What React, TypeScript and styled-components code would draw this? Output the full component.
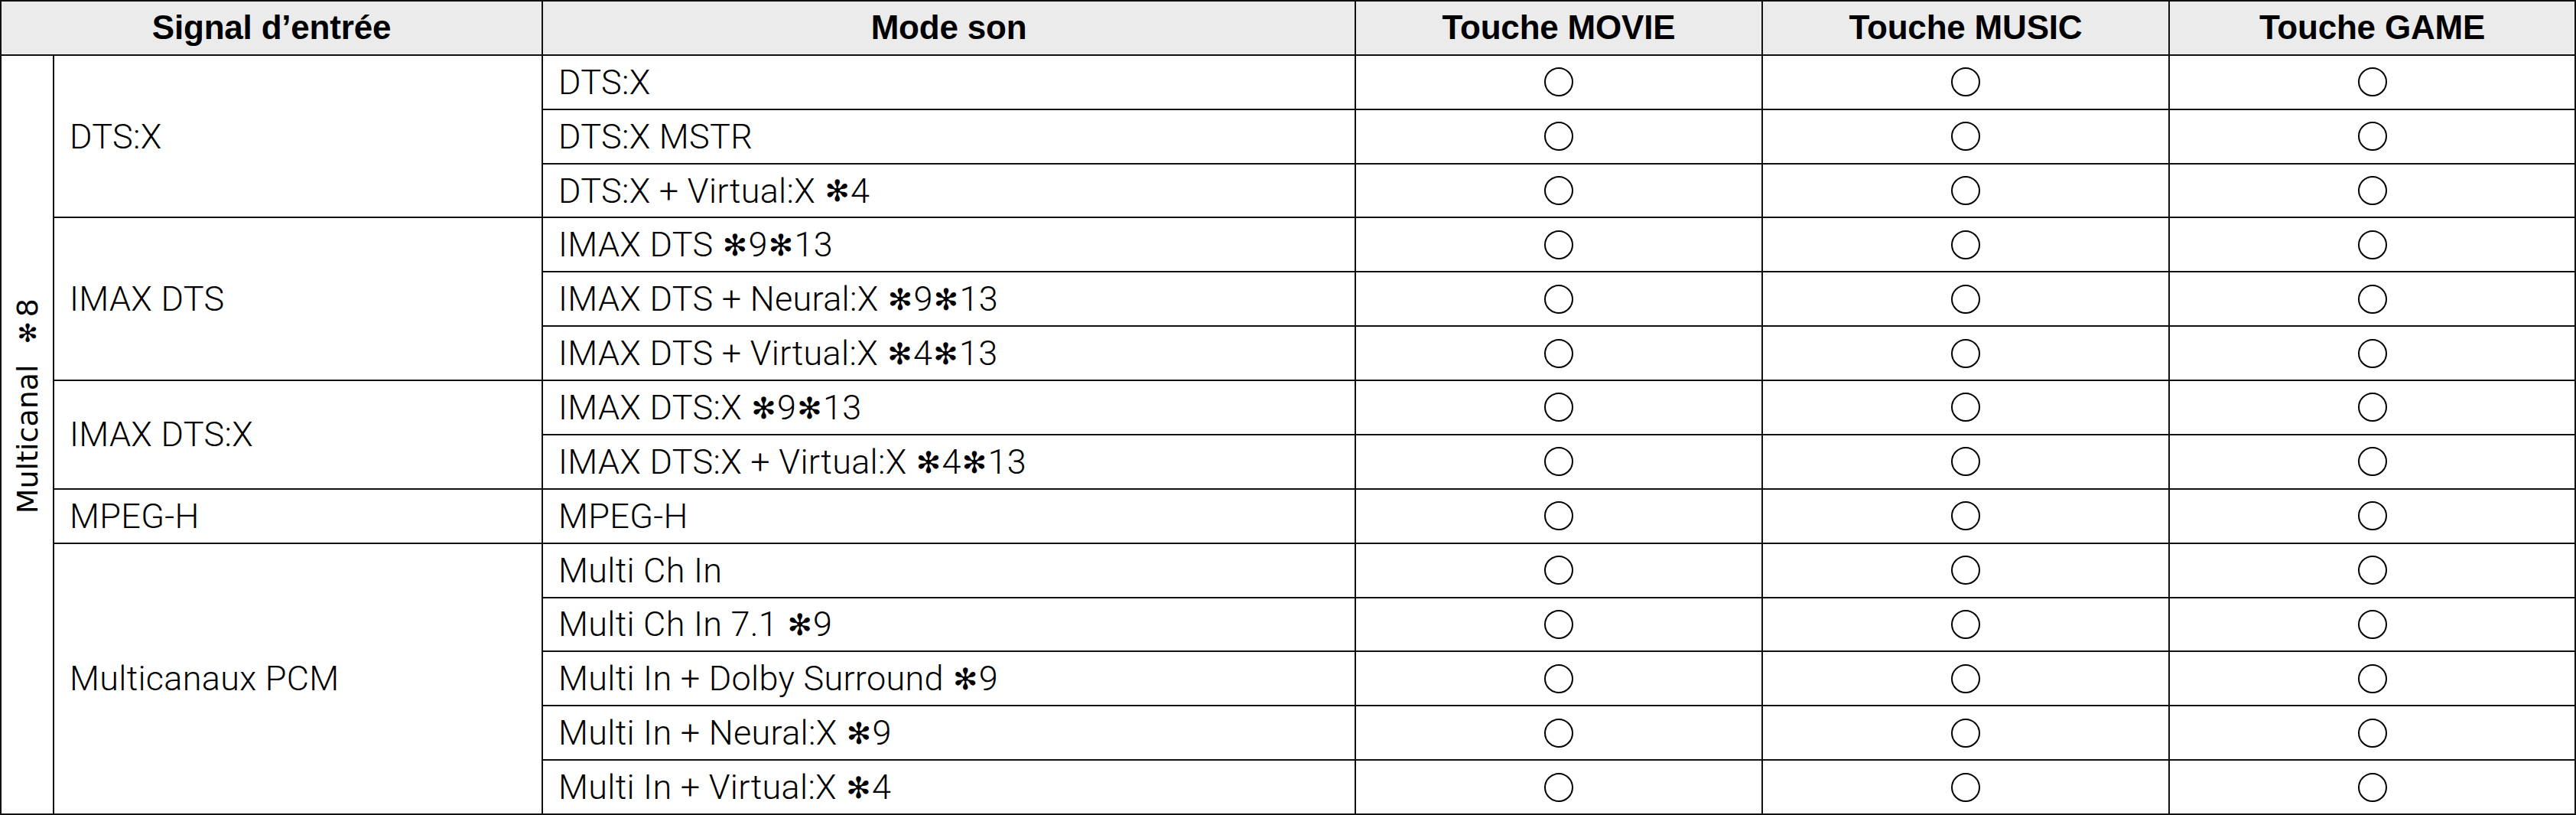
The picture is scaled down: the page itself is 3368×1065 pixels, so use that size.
import React from "react";
import styled, { createGlobalStyle } from "styled-components";

const Global = createGlobalStyle`
  html, body { margin: 0; padding: 0; background: #ffffff; }
  body { font-family: "Liberation Sans", Arial, sans-serif; }
`;

const Grid = styled.div`
  box-sizing: border-box;
  width: 3368px;
  height: 1065px;
  display: grid;
  grid-template-columns: 67px 637px 1061px 530px 530px 529px;
  grid-template-rows: repeat(15, 1fr);
  gap: 2px;
  padding: 2px;
  background: #111111;
`;

const Cell = styled.div<{ $rowSpan?: number; $colSpan?: number }>`
  background: #ffffff;
  display: flex;
  align-items: center;
  min-width: 0;
  min-height: 0;
  grid-row: span ${(p) => p.$rowSpan ?? 1};
  grid-column: span ${(p) => p.$colSpan ?? 1};
`;

const HeadCell = styled(Cell)`
  background: #ebebeb;
  justify-content: center;
  font-family: "Liberation Sans", Arial, sans-serif;
  font-weight: 700;
  font-size: 44px;
  color: #000;
  letter-spacing: -0.2px;
`;

const TextCell = styled(Cell)`
  padding-left: 20px;
  font-family: "Roboto", "Liberation Sans", sans-serif;
  font-weight: 300;
  font-size: 45px;
  letter-spacing: 0.3px;
  color: #000;
  white-space: nowrap;
`;

const Label = styled.span`
  white-space: pre;
`;

const MarkCell = styled(Cell)`
  justify-content: center;
`;

const SideCell = styled(Cell)`
  justify-content: center;
  padding-bottom: 74px;
  box-sizing: border-box;
`;

const SideLabel = styled.span`
  writing-mode: vertical-rl;
  transform: rotate(180deg);
  font-family: "DejaVu Sans", "Liberation Sans", sans-serif;
  font-size: 38px;
  color: #000;
  white-space: pre;
`;

const Ast = styled.span`
  font-family: "DejaVu Sans", sans-serif;
  font-size: 0.86em;
  font-weight: 700;
  margin: 0 1px;
  position: relative;
  top: -0.03em;
`;

const Ring = styled.span`
  box-sizing: border-box;
  width: 38px;
  height: 38px;
  border: 2px solid #000;
  border-radius: 50%;
`;

type Mode = { name: string; notes?: string[] };
type Group = { signal: string; modes: Mode[] };

const groups: Group[] = [
  {
    signal: "DTS:X",
    modes: [
      { name: "DTS:X" },
      { name: "DTS:X MSTR" },
      { name: "DTS:X + Virtual:X", notes: ["4"] },
    ],
  },
  {
    signal: "IMAX DTS",
    modes: [
      { name: "IMAX DTS", notes: ["9", "13"] },
      { name: "IMAX DTS + Neural:X", notes: ["9", "13"] },
      { name: "IMAX DTS + Virtual:X", notes: ["4", "13"] },
    ],
  },
  {
    signal: "IMAX DTS:X",
    modes: [
      { name: "IMAX DTS:X", notes: ["9", "13"] },
      { name: "IMAX DTS:X + Virtual:X", notes: ["4", "13"] },
    ],
  },
  { signal: "MPEG-H", modes: [{ name: "MPEG-H" }] },
  {
    signal: "Multicanaux PCM",
    modes: [
      { name: "Multi Ch In" },
      { name: "Multi Ch In 7.1", notes: ["9"] },
      { name: "Multi In + Dolby Surround", notes: ["9"] },
      { name: "Multi In + Neural:X", notes: ["9"] },
      { name: "Multi In + Virtual:X", notes: ["4"] },
    ],
  },
];

const totalRows = groups.reduce((n, g) => n + g.modes.length, 0);

function Notes({ notes }: { notes?: string[] }) {
  if (!notes || notes.length === 0) return null;
  return (
    <>
      {" "}
      {notes.map((n) => (
        <React.Fragment key={n}>
          <Ast>✻</Ast>
          {n}
        </React.Fragment>
      ))}
    </>
  );
}

export default function App() {
  const cells: React.ReactNode[] = [];
  groups.forEach((g, gi) => {
    g.modes.forEach((m, mi) => {
      if (gi === 0 && mi === 0) {
        cells.push(
          <SideCell key="side" $rowSpan={totalRows}>
            <SideLabel>
              Multicanal{"  "}
              <Ast>✻</Ast>8
            </SideLabel>
          </SideCell>
        );
      }
      if (mi === 0) {
        cells.push(
          <TextCell key={`s${gi}`} $rowSpan={g.modes.length}>
            <Label>{g.signal}</Label>
          </TextCell>
        );
      }
      cells.push(
        <TextCell key={`m${gi}-${mi}`}>
          <Label>
            {m.name}
            <Notes notes={m.notes} />
          </Label>
        </TextCell>
      );
      ["movie", "music", "game"].forEach((k) =>
        cells.push(
          <MarkCell key={`${k}${gi}-${mi}`}>
            <Ring />
          </MarkCell>
        )
      );
    });
  });

  return (
    <>
      <Global />
      <Grid>
        <HeadCell $colSpan={2}>Signal d’entrée</HeadCell>
        <HeadCell>Mode son</HeadCell>
        <HeadCell>Touche MOVIE</HeadCell>
        <HeadCell>Touche MUSIC</HeadCell>
        <HeadCell>Touche GAME</HeadCell>
        {cells}
      </Grid>
    </>
  );
}
